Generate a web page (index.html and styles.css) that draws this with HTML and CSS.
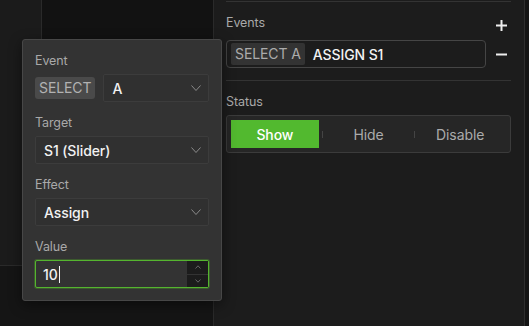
FILE: index.html
```html
<!DOCTYPE html>
<html lang="en">
<head>
<meta charset="utf-8">
<title>Events</title>
<link rel="stylesheet" href="styles.css">
</head>
<body>
<div class="app">
  <div class="workspace">
    <div class="ws-side"></div>
    <div class="ws-canvas"></div>
    <div class="ws-bottom"></div>

    <div class="popover">
      <div class="field">
        <div class="field-label">Event</div>
        <div class="event-pick">
          <span class="trigger-tag">SELECT</span>
          <div class="select select-grow">
            <span class="select-value">A</span>
            <svg class="chev" width="10" height="6" viewBox="0 0 10 6"><path d="M0.5 0.5 L5 5.5 L9.5 0.5" fill="none" stroke="#8a8a8a" stroke-width="1"/></svg>
          </div>
        </div>
      </div>
      <div class="field">
        <div class="field-label">Target</div>
        <div class="select">
          <span class="select-value">S1 (Slider)</span>
          <svg class="chev" width="10" height="6" viewBox="0 0 10 6"><path d="M0.5 0.5 L5 5.5 L9.5 0.5" fill="none" stroke="#8a8a8a" stroke-width="1"/></svg>
        </div>
      </div>
      <div class="field">
        <div class="field-label">Effect</div>
        <div class="select">
          <span class="select-value">Assign</span>
          <svg class="chev" width="10" height="6" viewBox="0 0 10 6"><path d="M0.5 0.5 L5 5.5 L9.5 0.5" fill="none" stroke="#8a8a8a" stroke-width="1"/></svg>
        </div>
      </div>
      <div class="field">
        <div class="field-label">Value</div>
        <div class="number-input">
          <span class="number-value">10<span class="caret"></span></span>
          <div class="spinner">
            <div class="spin-btn">
              <svg width="6" height="4" viewBox="0 0 6 4"><path d="M0.5 3.5 L3 0.8 L5.5 3.5" fill="none" stroke="#666" stroke-width="1"/></svg>
            </div>
            <div class="spin-btn">
              <svg width="6" height="4" viewBox="0 0 6 4"><path d="M0.5 0.5 L3 3.2 L5.5 0.5" fill="none" stroke="#666" stroke-width="1"/></svg>
            </div>
          </div>
        </div>
      </div>
    </div>
  </div>

  <aside class="panel">
    <div class="rule"></div>
    <div class="section-head">
      <span class="section-title">Events</span>
      <button class="icon-btn icon-add" aria-label="Add event">
        <svg width="11" height="11" viewBox="0 0 11 11"><path d="M5.5 0 V11 M0 5.5 H11" stroke="#eeeeee" stroke-width="2"/></svg>
      </button>
    </div>
    <div class="event-row">
      <div class="event-chip">
        <span class="chip-tag">SELECT A</span>
        <span class="chip-action">ASSIGN S1</span>
      </div>
      <button class="icon-btn" aria-label="Remove event">
        <svg width="11" height="11" viewBox="0 0 11 11"><path d="M0 5.5 H11" stroke="#eeeeee" stroke-width="2"/></svg>
      </button>
    </div>
    <div class="rule rule-gap"></div>
    <div class="section-title status-title">Status</div>
    <div class="segmented">
      <button class="seg seg-active">Show</button>
      <button class="seg">Hide</button>
      <button class="seg">Disable</button>
    </div>
  </aside>
  <div class="scroll-strip"></div>
</div>
</body>
</html>
```

FILE: styles.css
```css
* { box-sizing: border-box; }

html, body {
  margin: 0;
  padding: 0;
  width: 529px;
  height: 326px;
  overflow: hidden;
  background: #161616;
  font-family: "Inter", "Noto Sans", "Liberation Sans", sans-serif;
  -webkit-font-smoothing: antialiased;
}

.app {
  display: flex;
  width: 529px;
  height: 326px;
}

/* ---------- left workspace ---------- */
.workspace {
  position: relative;
  width: 214px;
  height: 326px;
  border-right: 1px solid #2a2a2a;
  display: grid;
  grid-template-columns: 42px 1fr;
  grid-template-rows: 266px 1fr;
}

.ws-side {
  background: #1b1b1b;
  border-right: 1px solid #2a2a2a;
  border-bottom: 1px solid #2a2a2a;
}

.ws-canvas {
  background: #121212;
  border-bottom: 1px solid #2a2a2a;
}

.ws-bottom {
  grid-column: 1 / 3;
  background: #151515;
}

/* ---------- popover ---------- */
.popover {
  position: absolute;
  left: 22px;
  top: 39px;
  width: 200px;
  padding: 12px;
  background: #333333;
  border: 1px solid #474747;
  border-radius: 3px;
  box-shadow: 0 4px 14px rgba(0, 0, 0, 0.45);
  display: flex;
  flex-direction: column;
  gap: 12px;
  z-index: 2;
}

.field {
  display: flex;
  flex-direction: column;
  gap: 5px;
}

.field-label {
  padding-top: 1px;
  font-size: 12.5px;
  line-height: 16px;
  color: #a9a9a9;
  letter-spacing: -0.1px;
}

.event-pick {
  display: flex;
  align-items: center;
  gap: 8px;
}

.trigger-tag {
  height: 22px;
  line-height: 22px;
  padding: 0 4px;
  background: #4a4a4a;
  border-radius: 3px;
  color: #b2b2b2;
  font-size: 14px;
  letter-spacing: -0.1px;
}

.select {
  height: 28px;
  display: flex;
  align-items: center;
  justify-content: space-between;
  padding: 0 7px 0 8px;
  background: #303030;
  border: 1px solid #3c3c3c;
  border-radius: 2px;
}

.select-grow { flex: 1; }

.select-value {
  font-size: 14px;
  color: #f2f2f2;
  font-weight: 500;
  letter-spacing: -0.1px;
}

.chev { display: block; }

.number-input {
  height: 28px;
  display: flex;
  align-items: stretch;
  background: #333333;
  border: 1px solid #55b52f;
  border-radius: 2px;
  box-shadow: 0 0 0 1px rgba(70, 140, 40, 0.45);
  padding-left: 7px;
}

.number-value {
  flex: 1;
  display: flex;
  align-items: center;
  font-size: 14px;
  font-weight: 500;
  color: #f2f2f2;
}

.caret {
  display: inline-block;
  width: 1px;
  height: 17px;
  background: #f2f2f2;
  margin-left: 1px;
}

.spinner {
  width: 21px;
  display: flex;
  flex-direction: column;
  background: #1c1c1c;
}

.spin-btn {
  flex: 1;
  display: flex;
  align-items: center;
  justify-content: center;
}

.spin-btn + .spin-btn {
  border-top: 1px solid #333333;
}

/* ---------- right panel ---------- */
.panel {
  width: 311px;
  height: 326px;
  background: #1c1c1c;
  border-right: 1px solid #2e2e2e;
  padding: 1px 13px 0 12px;
  display: flex;
  flex-direction: column;
}

.rule {
  height: 1px;
  background: #333333;
  flex: none;
}

.rule-gap { margin-top: 12px; }

.section-head {
  height: 38px;
  display: flex;
  justify-content: space-between;
  align-items: flex-start;
}

.section-title {
  margin-top: 13px;
  font-size: 12.5px;
  line-height: 16px;
  color: #a9a9a9;
  letter-spacing: -0.1px;
}

.status-title { margin-top: 13px; }

.icon-btn {
  width: 20px;
  height: 11px;
  padding: 0;
  border: 0;
  background: transparent;
  display: flex;
  align-items: center;
  justify-content: center;
}

.icon-add { margin-top: 18px; }

.event-row {
  display: flex;
  justify-content: space-between;
  align-items: center;
}

.event-chip {
  width: 260px;
  height: 28px;
  display: flex;
  align-items: center;
  gap: 8px;
  padding: 0 4px;
  border: 1px solid #454545;
  border-radius: 4px;
}

.chip-tag {
  height: 22px;
  line-height: 22px;
  padding: 0 4px;
  background: #333333;
  border-radius: 2px;
  font-size: 14px;
  color: #ababab;
  letter-spacing: -0.1px;
}

.chip-action {
  font-size: 14px;
  font-weight: 500;
  color: #f2f2f2;
  letter-spacing: -0.1px;
}

.segmented {
  margin-top: 5px;
  height: 38px;
  display: grid;
  grid-template-columns: 1fr 1fr 1fr;
  padding: 4px;
  background: #262626;
  border: 1px solid #3b3b3b;
  border-radius: 3px;
}

.seg {
  position: relative;
  border: 0;
  background: transparent;
  font-family: inherit;
  font-size: 14px;
  color: #ababab;
  padding: 0;
  letter-spacing: -0.1px;
}

.seg + .seg::before {
  content: "";
  position: absolute;
  left: 0;
  top: 11px;
  width: 1px;
  height: 7px;
  background: #444444;
}

.seg-active {
  background: #52b92f;
  color: #ffffff;
  font-weight: 500;
  margin-right: 4px;
}

.seg-active + .seg::before { left: -1px; }

.scroll-strip {
  flex: 1;
  background: #141414;
}
```
